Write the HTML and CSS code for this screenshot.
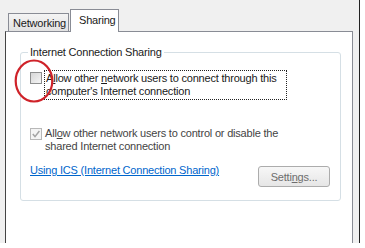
FILE: index.html
```html
<!DOCTYPE html>
<html lang="en">
<head>
    <meta charset="UTF-8">
    <title>Sharing</title>
    <link rel="stylesheet" href="styles.css">
</head>
<body>
    <!--Dialog window with the tab strip-->
    <div class="dialog">
        <div class="tabs">
            <div class="tab">Networking</div>
            <div class="tab active">Sharing</div>
        </div>
        <div class="panel">
            <fieldset class="group">
                <legend>Internet Connection Sharing</legend>
                <div class="option first">
                    <span class="box"></span>
                    <span class="label focused">A<u>l</u>low other <u>n</u>etwork users to connect through this<br>computer's Internet connection</span>
                    <svg class="ring" width="42" height="46" viewBox="0 0 42 46">
                        <ellipse cx="21" cy="23" rx="18.3" ry="20.5" fill="none" stroke="#cf2229" stroke-width="2.2"/>
                    </svg>
                </div>
                <div class="option disabled">
                    <span class="box checked">
                        <svg width="10" height="10" viewBox="0 0 10 10">
                            <path d="M1.8 5 L4 7.6 L8.4 2" fill="none" stroke="#a3a3a3" stroke-width="1.5"/>
                        </svg>
                    </span>
                    <span class="label">All<u>o</u>w other network users to control or disable the<br>shared Internet connection</span>
                </div>
                <div class="bottom">
                    <a href="#" class="link">Using ICS (Internet Connection Sharing)</a>
                    <button class="btn">Setti<u>n</u>gs...</button>
                </div>
            </fieldset>
        </div>
    </div>
</body>
</html>
```

FILE: styles.css
```css
body {
    margin: 0;
    background: #fff;
    font-family: "Liberation Sans", Arial, sans-serif;
    font-size: 11px;
    letter-spacing: -0.2px;
    color: #1a1a1a;
}
.dialog { /*gray window behind the tabs*/
    width: 360px;
    height: 243px;
    background: #f0f0f0;
    border-right: 1px solid #222;
    box-sizing: border-box;
    padding: 9px 6px 0 5px;
    display: flex;
    flex-direction: column;
}
.tabs {
    display: flex;
    align-items: flex-end;
    height: 22px;
    margin-left: 3px;
}
.tab {
    height: 17px;
    width: 55px;
    padding: 0 0 0 4px;
    line-height: 18px;
    border: 1px solid #898c95;
    border-bottom: none;
    background: linear-gradient(#f4f4f4, #e2e2e2);
}
.tab.active {
    position: relative;
    height: 22px;
    width: 39px;
    padding-left: 8px;
    margin-left: 1px;
    margin-bottom: -1px;
    line-height: 20px;
    background: #fff;
}
.panel {
    flex: 1;
    background: #fff;
    border: 1px solid #898c95;
    border-left-color: #444;
    border-bottom: none;
    padding: 14px 11px 0 14px;
}
.group {
    margin: 0;
    border: 1px solid #d5dfe5;
    border-radius: 3px;
    padding: 0 10px 13px 9px;
}
.group legend {
    padding: 0 2px;
    margin-left: -2px;
    line-height: 13px;
}
.option {
    display: flex;
    align-items: flex-start;
    position: relative;
}
.option.first {
    margin-top: 12px;
}
.box {
    width: 10px;
    height: 10px;
    border: 1px solid #8e8f8f;
    background: linear-gradient(135deg, #d6d6d6, #f6f6f6);
    margin-top: 1px;
    flex-shrink: 0;
    display: flex;
}
.box.checked {
    background: #f4f4f4;
    border-color: #b8b8b8;
}
.label {
    margin-left: 3px;
    line-height: 13px;
    white-space: nowrap;
}
.focused {
    outline: 1px dotted #222;
    padding: 1px 1px 1px 1px;
    width: 239px;
}
.ring { /*red circle drawn over the checkbox*/
    position: absolute;
    left: -17px;
    top: -13px;
}
.disabled {
    margin-top: 28px;
    color: #444;
}
.bottom {
    display: flex;
    justify-content: space-between;
    align-items: flex-start;
    margin-top: 13px;
}
.link {
    color: #0066cc;
    line-height: 13px;
    margin-top: -2px;
}
.btn {
    width: 72px;
    height: 21px;
    border: 1px solid #acacac;
    border-radius: 3px;
    background: linear-gradient(#f7f7f7, #e6e6e6);
    color: #6d6d6d;
    font-family: "Liberation Sans", Arial, sans-serif;
    font-size: 11px;
    letter-spacing: -0.2px;
    padding: 0;
}
```
